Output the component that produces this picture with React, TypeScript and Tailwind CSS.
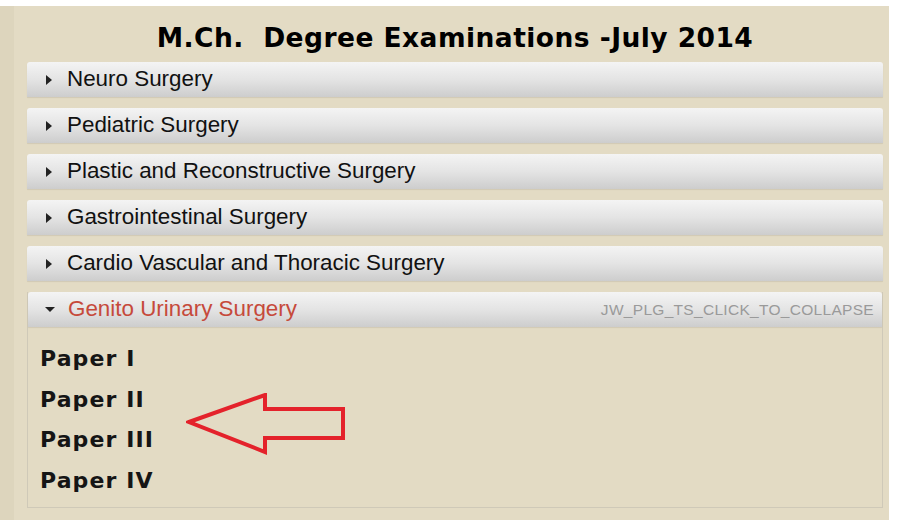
import { ReactNode } from "react";

const sections = [
  "Neuro Surgery",
  "Pediatric Surgery",
  "Plastic and Reconstructive Surgery",
  "Gastrointestinal Surgery",
  "Cardio Vascular and Thoracic Surgery",
];

const papers = ["Paper I", "Paper II", "Paper III", "Paper IV"];

function Bar({ open, children, right }: { open?: boolean; children: ReactNode; right?: ReactNode }) {
  return (
    <div className="flex h-[35px] items-center rounded-t-[3px] bg-gradient-to-b from-[#f4f4f4] via-[#e4e4e4] to-[#cdcdcd] pl-[17px] pr-[8px] shadow-[0_1px_1px_rgba(0,0,0,0.08)]">
      {open ? (
        <svg width="10" height="6" viewBox="0 0 10 6" className="mr-[13px] shrink-0">
          <path d="M0 0 L10 0 L5 5 Z" fill="#222" />
        </svg>
      ) : (
        <svg width="6" height="10" viewBox="0 0 6 10" className="ml-[2px] mr-[15px] shrink-0">
          <path d="M0 0 L6 5 L0 10 Z" fill="#222" />
        </svg>
      )}
      <span
        className={`flex-1 text-[22.4px] leading-none ${open ? "text-[#c64a3b]" : "text-[#111]"}`}
        style={{ fontFamily: '"Liberation Sans", Arial, sans-serif' }}
      >
        {children}
      </span>
      {right}
    </div>
  );
}

export default function App() {
  return (
    <div className="h-[520px] w-[903px] overflow-hidden bg-white">
      <div className="mt-[6px] h-[514px] w-[889px] border-l-[14px] border-[#ddd5bd] bg-[#e3dbc4] pl-[13px] pr-[6px]">
        <h1
          className="flex h-[56px] items-center justify-center whitespace-pre pt-[8px] text-[26.5px] font-bold tracking-[0.45px] text-black"
          style={{ fontFamily: '"DejaVu Sans", "Open Sans", sans-serif' }}
        >
          {"M.Ch.  Degree Examinations -July 2014"}
        </h1>
        <div className="flex flex-col gap-[11px]">
          {sections.map((s) => (
            <Bar key={s}>{s}</Bar>
          ))}
          <div className="border border-t-0 border-[#cfc9b8]">
            <Bar
              open
              right={
                <span
                  className="text-[15.5px] tracking-[0.3px] text-[#9a9a9a]"
                  style={{ fontFamily: '"Liberation Sans", Arial, sans-serif' }}
                >
                  JW_PLG_TS_CLICK_TO_COLLAPSE
                </span>
              }
            >
              Genito Urinary Surgery
            </Bar>
            <div className="relative h-[180px] pl-[12px] pt-[18px]">
              <ul
                className="flex flex-col gap-[12px] text-[22px] font-bold leading-[28.5px] tracking-[1.1px] text-[#151515]"
                style={{ fontFamily: '"DejaVu Sans", "Open Sans", sans-serif' }}
              >
                {papers.map((p) => (
                  <li key={p}>{p}</li>
                ))}
              </ul>
              <svg
                className="absolute left-[158px] top-[66px]"
                width="160"
                height="62"
                viewBox="0 0 160 62"
              >
                <path
                  d="M3 29 L79 2 L79 16 L157 16 L157 45 L79 45 L79 59 Z"
                  fill="none"
                  stroke="#e4222b"
                  strokeWidth="4"
                  strokeLinejoin="miter"
                />
              </svg>
            </div>
          </div>
        </div>
      </div>
    </div>
  );
}
